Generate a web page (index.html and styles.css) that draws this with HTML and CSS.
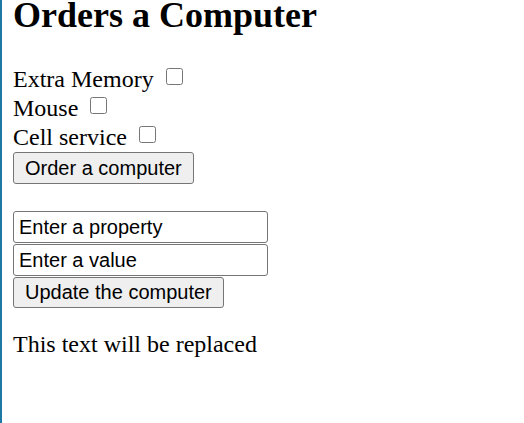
FILE: index.html
```html
<!DOCTYPE html>
<html>
<head>
<meta charset="utf-8">
<link rel="stylesheet" href="styles.css">
</head>
<body>
<div class="page">
  <h1 class="title">Orders a Computer</h1>
  <div class="options">
    <label class="opt">Extra Memory <input type="checkbox" class="box"></label>
    <label class="opt">Mouse <input type="checkbox" class="box"></label>
    <label class="opt">Cell service <input type="checkbox" class="box"></label>
  </div>
  <button class="btn btn-order">Order a computer</button>
  <div class="update">
    <input class="field" type="text" value="Enter a property">
    <input class="field" type="text" value="Enter a value">
    <button class="btn">Update the computer</button>
  </div>
  <p class="result">This text will be replaced</p>
</div>
</body>
</html>
```
FILE: styles.css
```css
html, body { margin: 0; padding: 0; background: #fff; }
body { border-left: 2px solid #1f78a4; min-height: 423px; box-sizing: border-box; }
.page { padding: 0 0 0 11px; font-family: "Liberation Serif", serif; color: #000; }
.title { font-size: 36px; font-weight: bold; margin: 0 0 35px 0; line-height: 30px; }
.options { display: flex; flex-direction: column; align-items: flex-start; }
.opt { font-size: 24px; line-height: 29px; display: flex; align-items: center; gap: 12px; }
.box { width: 17px; height: 17px; margin: 0 0 7px 0; }
.btn { font-family: "Liberation Sans", Arial, sans-serif; font-size: 20px; padding: 2px 11px; border: 1px solid #767676; border-radius: 3px; background: #efefef; color: #000; height: 31px; display: block; }
.btn-order { height: 32px; }
.update { display: flex; flex-direction: column; align-items: flex-start; gap: 1px; margin-top: 27px; }
.field { font-family: "Liberation Sans", Arial, sans-serif; font-size: 20px; width: 255px; height: 32px; box-sizing: border-box; padding: 1px 5px; border: 1px solid #767676; border-radius: 3px; color: #000; margin: 0; }
.result { font-size: 24px; margin: 22px 0 0 0; line-height: 29px; }
```
